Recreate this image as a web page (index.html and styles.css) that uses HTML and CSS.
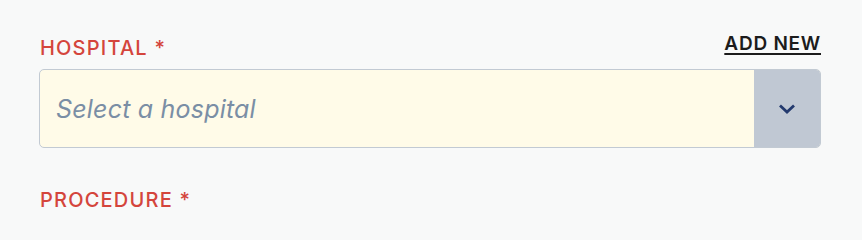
FILE: index.html
```html
<!DOCTYPE html>
<html lang="en">
<head>
<meta charset="utf-8">
<title>Form</title>
<link rel="stylesheet" href="styles.css">
</head>
<body>
<div class="form">
  <div class="field">
    <div class="field-head">
      <label class="label" for="hospital">HOSPITAL <span class="req">*</span></label>
      <a class="add-new" href="#">ADD NEW</a>
    </div>
    <div class="select">
      <div class="select-value" id="hospital">Select a hospital</div>
      <div class="select-btn">
        <svg width="18" height="12" viewBox="0 0 18 12" aria-hidden="true"><path d="M2 2.5 L9 9 L16 2.5" fill="none" stroke="#233a6e" stroke-width="2.8" stroke-linecap="butt" stroke-linejoin="miter"/></svg>
      </div>
    </div>
  </div>
  <div class="field">
    <div class="field-head">
      <label class="label">PROCEDURE <span class="req">*</span></label>
    </div>
  </div>
</div>
</body>
</html>
```
FILE: styles.css
```css
* { box-sizing: border-box; }
html, body { margin: 0; padding: 0; }
body {
  background: #f8f9f9;
  font-family: Inter, "Noto Sans", sans-serif;
}
.form {
  padding: 35px 41px 0 39px;
  display: flex;
  flex-direction: column;
  gap: 39px;
}
.field-head {
  display: flex;
  justify-content: space-between;
  align-items: flex-end;
  height: 27px;
  margin-bottom: 7px;
  padding-left: 1px;
}
.label {
  color: #d4453c;
  font-size: 20px;
  line-height: 22px;
  padding-bottom: 3px;
  font-weight: 500;
  letter-spacing: 0.06em;
}
.add-new {
  color: #1c1c1c;
  font-size: 19px;
  line-height: 27px;
  font-weight: 600;
  letter-spacing: 0.04em;
  text-decoration: underline;
  text-decoration-thickness: 2px;
  text-underline-offset: 3px;
  position: relative;
  top: -5px;
}
.select {
  display: flex;
  height: 79px;
  border: 1px solid #c2cad3;
  border-radius: 5px;
  overflow: hidden;
  background: #fffbe8;
}
.select-value {
  flex: 1;
  display: flex;
  align-items: center;
  padding-left: 16px;
  font-size: 25px;
  letter-spacing: 0.2px;
  font-style: italic;
  color: #7a8ea5;
}
.select-btn {
  width: 66px;
  background: #c0c8d3;
  display: flex;
  align-items: center;
  justify-content: center;
}
```
